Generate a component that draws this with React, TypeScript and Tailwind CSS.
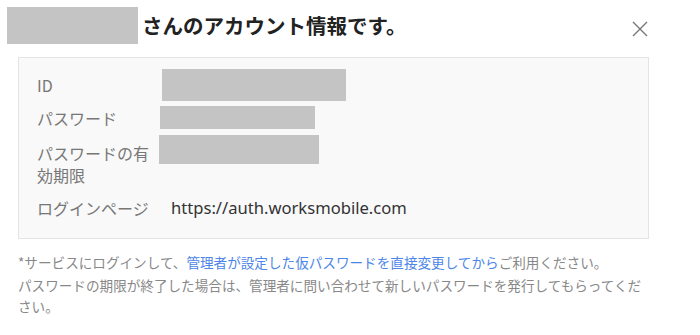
import React from "react";

const Blank = ({ className }: { className: string }) => <div className={"bg-[#c4c4c4] " + className} />;

const App = () => {
  return (
    <div className="w-[700px] h-[335px] bg-white font-['Noto_Sans_CJK_JP','Noto_Sans',sans-serif]">
      {/* header */}
      <div className="flex pt-[7px] pl-[7px] pr-[52px]">
        <Blank className="w-[131px] h-[37px]" />
        <h1 className="ml-[4px] text-[20.5px] font-bold leading-[36px] text-[#222]">さんのアカウント情報です。</h1>
        <div className="flex-1" />
        <button className="mt-[14px] w-[16px] h-[16px] text-[#777]">
          <svg viewBox="0 0 16 16" width="16" height="16" fill="none" stroke="currentColor" strokeWidth="1.4">
            <path d="M1 1 L15 15 M15 1 L1 15" />
          </svg>
        </button>
      </div>

      {/* account info */}
      <div className="mt-[13px] ml-[18px] w-[631px] border border-[#e4e4e4] bg-[#f9f9f9] pt-[11px] pb-[19px] pl-[18px] text-[16px] text-[#777]">
        <div className="flex items-center h-[32px]">
          <div className="w-[123px] pr-[5px]">ID</div>
          <Blank className="ml-[2px] w-[184px] h-[32px]" />
        </div>
        <div className="flex items-center h-[23px] mt-[5px]">
          <div className="w-[123px] pr-[5px]">パスワード</div>
          <Blank className="w-[155px] h-[23px]" />
        </div>
        <div className="flex items-start mt-[6px]">
          <div className="w-[123px] pr-[5px] pt-[7px] leading-[22px]">パスワードの有効期限</div>
          <Blank className="-ml-[1px] w-[160px] h-[29px]" />
        </div>
        <div className="flex items-center mt-[11px] leading-[22px]">
          <div className="w-[123px] pr-[5px]">ログインページ</div>
          <div className="ml-[11px] text-[16.6px] text-[#333] font-['Noto_Sans',sans-serif]">https://auth.worksmobile.com</div>
        </div>
      </div>

      {/* notes */}
      <div className="mt-[13px] ml-[18px] w-[632px] text-[13.6px] leading-[21px] text-[#888]">
        <p>
          *サービスにログインして、<span className="text-[#4d86e8]">管理者が設定した仮パスワードを直接変更してから</span>ご利用ください。
        </p>
        <p className="mt-[2px]">
          パスワードの期限が終了した場合は、管理者に問い合わせて新しいパスワードを発行してもらってください。
        </p>
      </div>
    </div>
  );
};

export default App;
